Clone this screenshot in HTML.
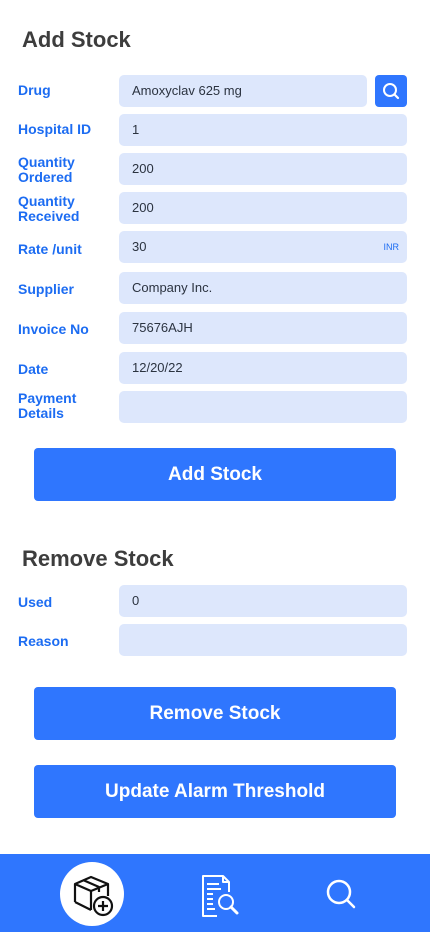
<!DOCTYPE html>
<html><head><style>
body{margin:0;width:430px;height:932px;background:#fff;font-family:"Liberation Sans",sans-serif;position:relative;overflow:hidden}
.h{position:absolute;left:22px;font-size:22px;font-weight:bold;color:#3d3d3d}
.l{position:absolute;left:18px;font-size:14px;font-weight:bold;color:#1c6cf2;line-height:15px}
.i{position:absolute;left:119px;width:288px;height:32px;background:#dde7fc;border-radius:5px;font-size:13px;color:#2b3340;line-height:32px;box-sizing:border-box;padding-left:13px}
.b{position:absolute;left:34px;width:362px;height:53px;background:#2f76fe;border-radius:4px;color:#fff;font-size:19px;font-weight:bold;text-align:center;line-height:53px}
</style></head><body>
<div class="h" style="top:27px">Add Stock</div>
<div class="l" style="top:83px">Drug</div>
<div class="i" style="top:75px;width:248px">Amoxyclav 625 mg</div>
<div style="position:absolute;left:375px;top:75px;width:32px;height:32px;background:#2f76fe;border-radius:4px"><svg width="32" height="32"><circle cx="15" cy="15" r="6" fill="none" stroke="#fff" stroke-width="2"/><path d="M19.5 19.5L23 23" stroke="#fff" stroke-width="2.2" stroke-linecap="round"/></svg></div>
<div class="l" style="top:122px">Hospital ID</div><div class="i" style="top:114px">1</div>
<div class="l" style="top:155px">Quantity<br>Ordered</div><div class="i" style="top:153px">200</div>
<div class="l" style="top:194px">Quantity<br>Received</div><div class="i" style="top:192px">200</div>
<div class="l" style="top:242px">Rate /unit</div><div class="i" style="top:231px">30<span style="position:absolute;right:8px;font-size:9px;color:#1c6cf2">INR</span></div>
<div class="l" style="top:282px">Supplier</div><div class="i" style="top:272px">Company Inc.</div>
<div class="l" style="top:322px">Invoice No</div><div class="i" style="top:312px">75676AJH</div>
<div class="l" style="top:362px">Date</div><div class="i" style="top:352px">12/20/22</div>
<div class="l" style="top:391px">Payment<br>Details</div><div class="i" style="top:391px"></div>
<div class="b" style="top:448px">Add Stock</div>
<div class="h" style="top:546px">Remove Stock</div>
<div class="l" style="top:595px">Used</div><div class="i" style="top:585px">0</div>
<div class="l" style="top:634px">Reason</div><div class="i" style="top:624px"></div>
<div class="b" style="top:687px">Remove Stock</div>
<div class="b" style="top:765px">Update Alarm Threshold</div>
<div style="position:absolute;left:0;top:854px;width:430px;height:78px;background:#2f76fe">
<div style="position:absolute;left:60px;top:8px;width:64px;height:64px;border-radius:50%;background:#fff"></div>
<svg width="430" height="78" style="position:absolute;left:0;top:0">
<g fill="none" stroke="#111" stroke-width="2.2" stroke-linejoin="round">
<path d="M75 48V30l16-7 17 7v12M75 30l16 7 17-7M91 37v19M75 48l16 8M83 26l16 7v5"/>
<circle cx="103" cy="52" r="9" fill="#fff"/><path d="M103 47v10M98 52h10"/>
</g>
<g fill="none" stroke="#fff" stroke-width="2" stroke-linejoin="round">
<path d="M217 62h-14V22h20l6 6v10M223 22v6h6M207 30h12M207 35h14M207 40h6M207 45h6M207 50h6M207 55h8"/>
<circle cx="226" cy="48" r="7"/><path d="M231 53l6 6" stroke-width="3" stroke-linecap="round"/>
</g>
<g fill="none" stroke="#fff" stroke-width="2.5" stroke-linecap="round"><circle cx="339" cy="38" r="11"/><path d="M347 46l7 7"/></g>
</svg></div>
</body></html>
